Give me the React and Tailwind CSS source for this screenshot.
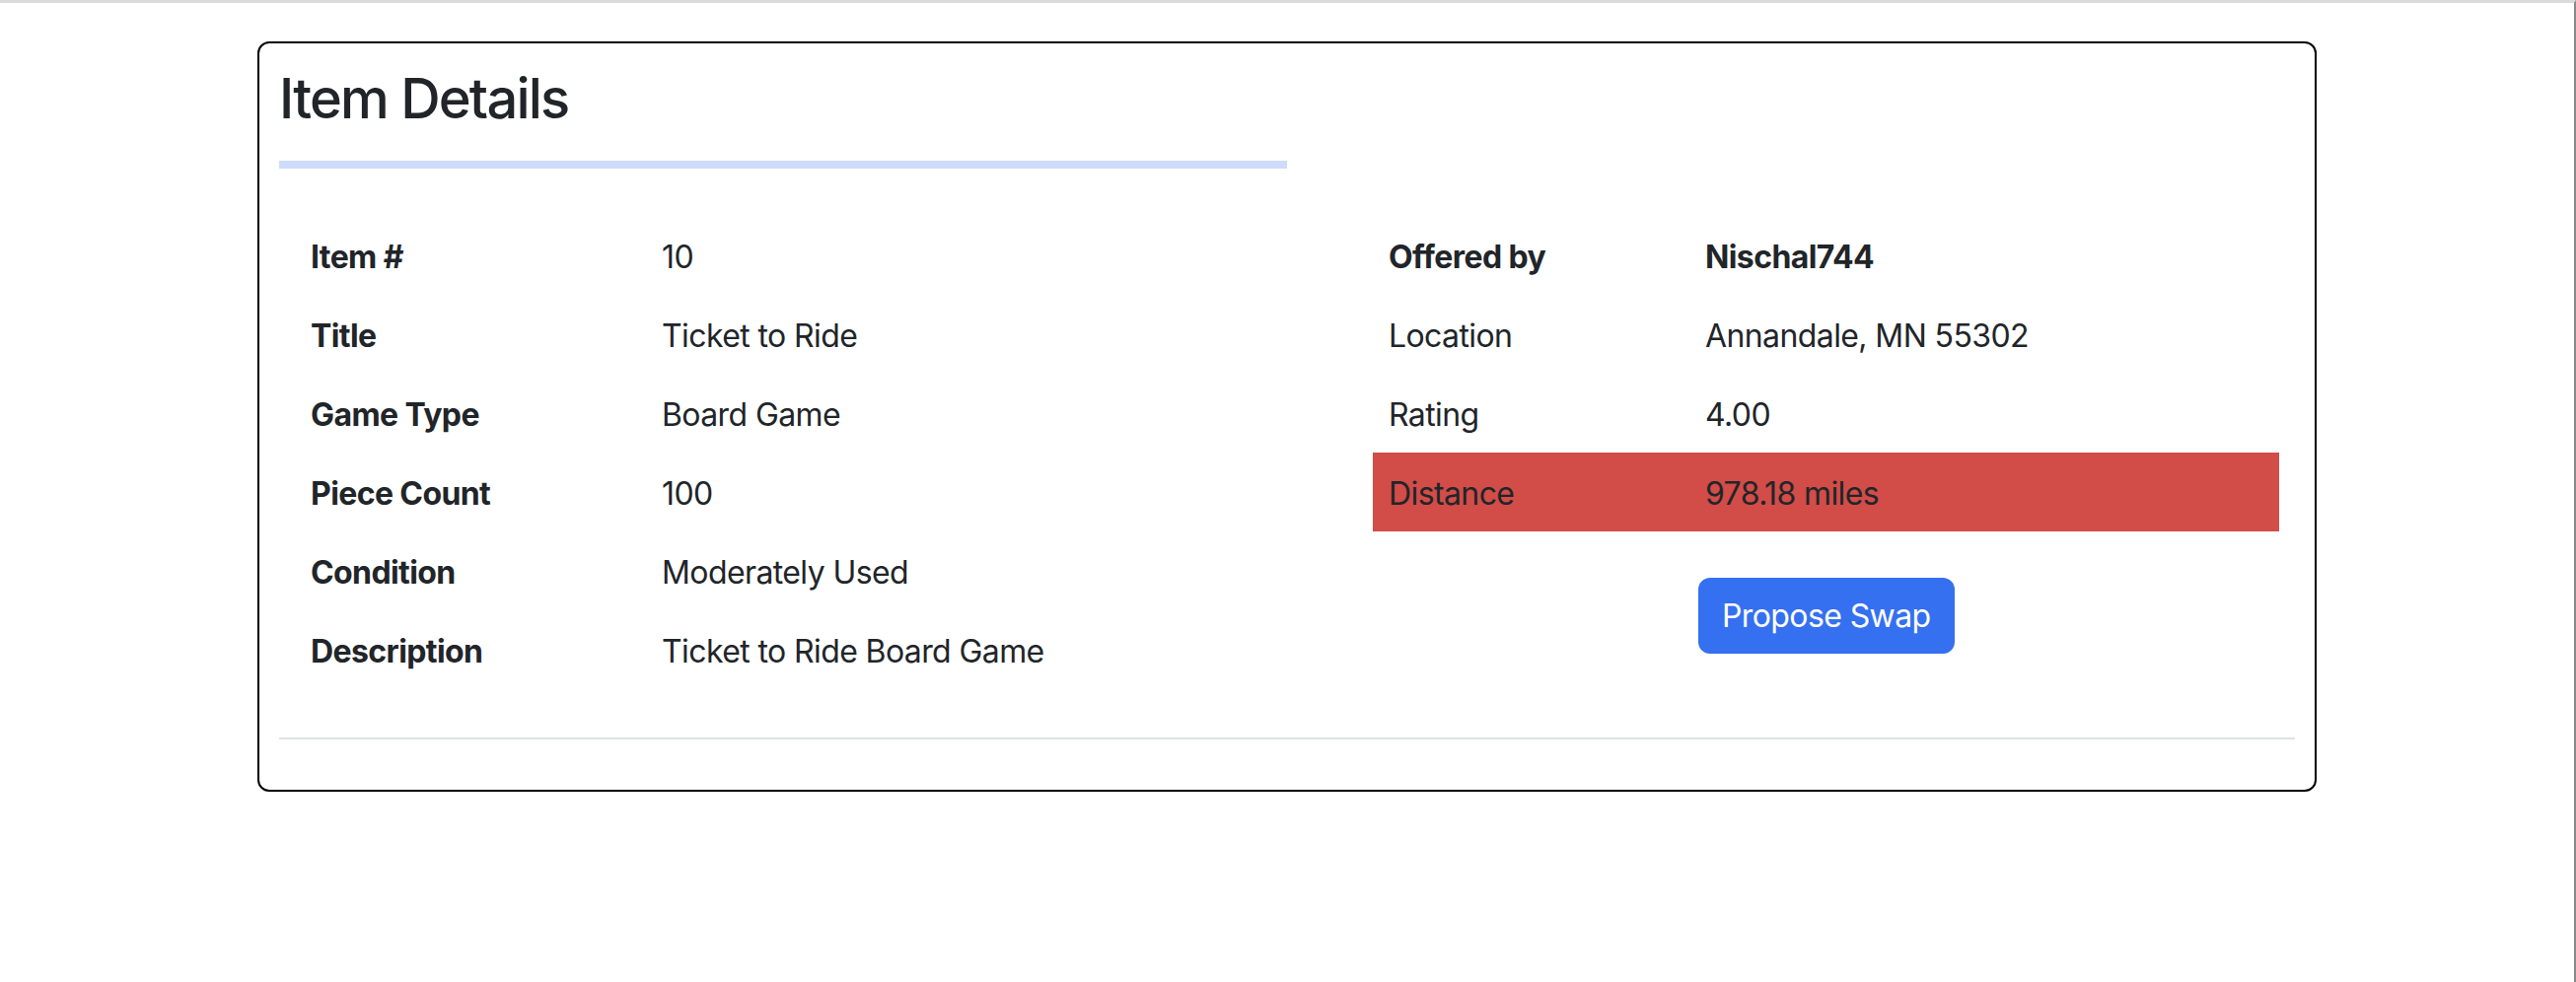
import React from "react";

const itemRows = [
  { label: "Item #", value: "10" },
  { label: "Title", value: "Ticket to Ride" },
  { label: "Game Type", value: "Board Game" },
  { label: "Piece Count", value: "100" },
  { label: "Condition", value: "Moderately Used" },
  { label: "Description", value: "Ticket to Ride Board Game" },
];

const ownerRows = [
  { label: "Offered by", value: "Nischal744", bold: true },
  { label: "Location", value: "Annandale, MN 55302" },
  { label: "Rating", value: "4.00" },
  { label: "Distance", value: "978.18 miles", highlight: true },
];

function ItemTable() {
  return (
    <div className="ml-[16px] w-[1060px]">
      {itemRows.map((row) => (
        <div key={row.label} className="flex h-[80px] items-center pt-[4px]">
          <div className="w-[356px] pl-[16px] font-bold">{row.label}</div>
          <div className="pl-[16px]">{row.value}</div>
        </div>
      ))}
    </div>
  );
}

function OwnerTable() {
  return (
    <div className="ml-auto mr-[16px] w-[919px]">
      {ownerRows.map((row) => (
        <div
          key={row.label}
          className={
            row.highlight
              ? "flex h-[80px] items-center bg-[#d24c48] pt-[4px]"
              : "flex h-[80px] items-center pt-[4px]"
          }
        >
          <div
            className={
              row.bold ? "w-[321px] pl-[16px] font-bold" : "w-[321px] pl-[16px]"
            }
          >
            {row.label}
          </div>
          <div className={row.bold ? "pl-[16px] font-bold" : "pl-[16px]"}>
            {row.value}
          </div>
        </div>
      ))}

      <div className="mt-[47px] flex">
        <div className="w-[321px]" />
        <button
          type="button"
          className="ml-[9px] h-[77px] rounded-[12px] bg-[#3570f1] px-[24px] text-white"
        >
          Propose Swap
        </button>
      </div>
    </div>
  );
}

export default function App() {
  return (
    <div className="h-[996px] w-full overflow-hidden border-t-[3px] border-r-2 border-t-[#dadada] border-r-[#8a8a8a] bg-white font-['Inter','Liberation_Sans',sans-serif] text-[32px] leading-[48px] tracking-[-0.6px] text-[#212529]">
      <div className="ml-[261px] mt-[39px] w-[2088px] rounded-[12px] border-2 border-black px-[20px]">
        <h1 className="pt-[23px] text-[56px] font-medium leading-[67px] tracking-[-1.8px]">
          Item Details
        </h1>
        <div className="mt-[29px] h-[8px] w-[1022px] bg-[#cddcfb]" />

        <div className="mt-[48px] flex">
          <ItemTable />
          <OwnerTable />
        </div>

        <hr className="mt-[49px] border-t-2 border-[#dee2e6]" />
        <div className="h-[51px]" />
      </div>
    </div>
  );
}
